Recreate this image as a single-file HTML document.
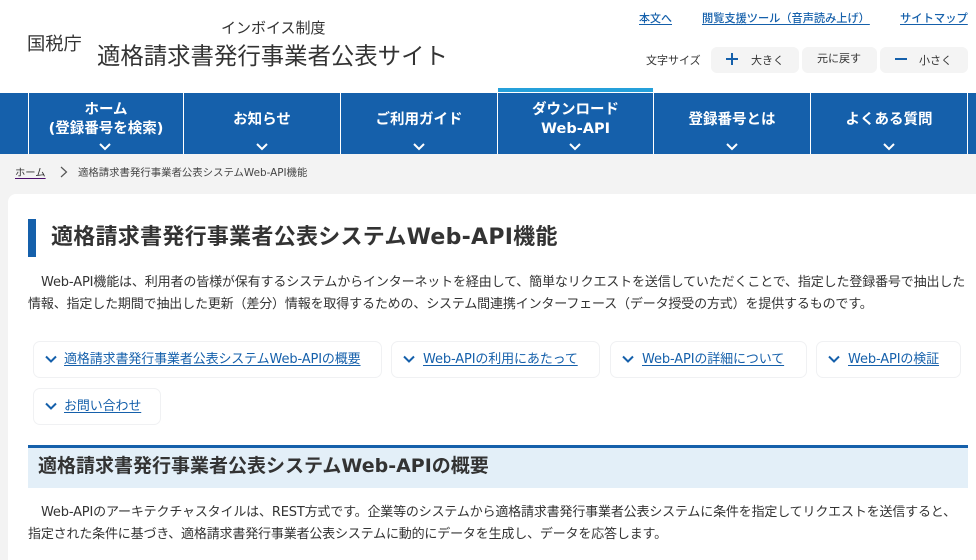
<!DOCTYPE html>
<html lang="ja"><head><meta charset="utf-8"><title>適格請求書発行事業者公表システムWeb-API機能</title>
<style>
html,body{margin:0;padding:0;background:#fff}
#p{position:relative;width:976px;height:560px;overflow:hidden;background:#fff;font-family:"DejaVu Sans","Noto Sans CJK JP",sans-serif;color:#333}
#p *{box-sizing:border-box}
.a{position:absolute;white-space:nowrap}
.l{color:#1560ab;text-decoration:underline;text-underline-offset:2px}
.n{position:absolute;top:93px;height:61px;border-left:1px solid #fff;color:#fff;font-weight:700;font-size:14.500px;line-height:19px;text-align:center}
.n span{position:absolute;left:0;right:0;white-space:nowrap}
.n svg{position:absolute;left:50%;margin-left:-7px;top:49px}
.b{position:absolute;height:26px;top:47px;background:#f4f4f4;border-radius:6px}
.t{position:absolute;height:37px;background:#fff;border:1px solid #f0f1f3;border-radius:7px}
.t svg{position:absolute;left:10px;top:13px}
.t a{position:absolute;left:30px;top:8px;font-size:13px;line-height:20px;white-space:nowrap;letter-spacing:-.13px}
</style></head><body><div id="p">
<div class="a" style="left:27px;top:34px;font-size:18.300px;line-height:22px;color:#333">国税庁</div>
<div class="a" style="left:221px;top:18px;font-size:15px;line-height:20px;color:#333">インボイス制度</div>
<div class="a" style="left:97px;top:40px;font-size:23.400px;line-height:32px;color:#333">適格請求書発行事業者公表サイト</div>

<a class="a l" style="left:639px;top:11px;font-size:11px;line-height:16px;font-weight:500">本文へ</a>
<a class="a l" style="left:702px;top:11px;font-size:11.200px;line-height:16px;font-weight:500">閲覧支援ツール（音声読み上げ）</a>
<a class="a l" style="left:900px;top:11px;font-size:11.300px;line-height:16px;font-weight:500">サイトマップ</a>

<div class="a" style="left:646px;top:53px;font-size:11px;line-height:16px">文字サイズ</div>
<div class="b" style="left:711px;width:88px"></div>
<div class="b" style="left:802px;width:75px"></div>
<div class="b" style="left:880px;width:88px"></div>
<div class="a" style="left:726px;top:58px;width:12px;height:2px;background:#1560ab"></div>
<div class="a" style="left:731px;top:53px;width:2px;height:12px;background:#1560ab"></div>
<div class="a" style="left:751px;top:53px;font-size:11px;line-height:16px">大きく</div>
<div class="a" style="left:817px;top:51px;font-size:11px;line-height:16px">元に戻す</div>
<div class="a" style="left:895px;top:58px;width:12px;height:2px;background:#1560ab"></div>
<div class="a" style="left:919px;top:53px;font-size:11px;line-height:16px">小さく</div>

<div class="a" style="left:0;top:93px;width:976px;height:61px;background:#1560ab"></div>
<div class="a" style="left:498px;top:88px;width:155px;height:4px;background:#25a0da"></div>
<div class="n" style="left:28px;width:155px"><span style="top:8px">ホーム</span><span style="top:27px">(登録番号を検索)</span><svg style="margin-left:-8px" width="14" height="9" viewBox="0 0 14 9"><path d="M2 2l5 5 5-5" fill="none" stroke="#fff" stroke-width="2"/></svg></div>
<div class="n" style="left:183px;width:157px"><span style="top:18px">お知らせ</span><svg width="14" height="9" viewBox="0 0 14 9"><path d="M2 2l5 5 5-5" fill="none" stroke="#fff" stroke-width="2"/></svg></div>
<div class="n" style="left:340px;width:157px"><span style="top:18px">ご利用ガイド</span><svg width="14" height="9" viewBox="0 0 14 9"><path d="M2 2l5 5 5-5" fill="none" stroke="#fff" stroke-width="2"/></svg></div>
<div class="n" style="left:497px;width:156px"><span style="top:8px">ダウンロード</span><span style="top:27px">Web-API</span><svg style="margin-left:-8px" width="14" height="9" viewBox="0 0 14 9"><path d="M2 2l5 5 5-5" fill="none" stroke="#fff" stroke-width="2"/></svg></div>
<div class="n" style="left:653px;width:157px"><span style="top:18px">登録番号とは</span><svg width="14" height="9" viewBox="0 0 14 9"><path d="M2 2l5 5 5-5" fill="none" stroke="#fff" stroke-width="2"/></svg></div>
<div class="n" style="left:810px;width:157px"><span style="top:18px">よくある質問</span><svg width="14" height="9" viewBox="0 0 14 9"><path d="M2 2l5 5 5-5" fill="none" stroke="#fff" stroke-width="2"/></svg></div>
<div class="n" style="left:967px;width:9px"></div>

<div class="a" style="left:0;top:154px;width:976px;height:406px;background:#f3f3f3"></div>
<a class="a" style="left:15px;top:166px;font-size:10.300px;line-height:15px;color:#333;text-decoration:underline;text-decoration-color:#4b0f6b;text-underline-offset:2px">ホーム</a>
<svg class="a" style="left:59px;top:166px" width="10" height="13" viewBox="0 0 10 13"><path d="M2 1l5.500 5-5.500 5" fill="none" stroke="#555" stroke-width="1.200"/></svg>
<div class="a" style="left:78px;top:166px;font-size:10.400px;line-height:15px;color:#444">適格請求書発行事業者公表システムWeb-API機能</div>

<div class="a" style="left:8px;top:194px;width:980px;height:380px;background:#fff;border-radius:8px"></div>
<div class="a" style="left:28px;top:219px;width:8px;height:38px;background:#1560ab"></div>
<div class="a" style="left:51px;top:223px;font-size:22px;line-height:30px;font-weight:700;color:#333;letter-spacing:.27px">適格請求書発行事業者公表システムWeb-API機能</div>

<div class="a" style="left:41px;top:273px;font-size:13px;line-height:20px;letter-spacing:-.14px">Web-API機能は、利用者の皆様が保有するシステムからインターネットを経由して、簡単なリクエストを送信していただくことで、指定した登録番号で抽出した</div>
<div class="a" style="left:28px;top:295px;font-size:13px;line-height:20px;letter-spacing:-.155px">情報、指定した期間で抽出した更新（差分）情報を取得するための、システム間連携インターフェース（データ授受の方式）を提供するものです。</div>

<div class="t" style="left:33px;top:341px;width:349px"><svg width="14" height="9" viewBox="0 0 14 9"><path d="M2 1.500l5 5 5-5" fill="none" stroke="#1560ab" stroke-width="2"/></svg><a class="l">適格請求書発行事業者公表システムWeb-APIの概要</a></div>
<div class="t" style="left:391px;top:341px;width:209px"><svg width="14" height="9" viewBox="0 0 14 9"><path d="M2 1.500l5 5 5-5" fill="none" stroke="#1560ab" stroke-width="2"/></svg><a class="l" style="left:31px">Web-APIの利用にあたって</a></div>
<div class="t" style="left:610px;top:341px;width:197px"><svg width="14" height="9" viewBox="0 0 14 9"><path d="M2 1.500l5 5 5-5" fill="none" stroke="#1560ab" stroke-width="2"/></svg><a class="l" style="left:31px">Web-APIの詳細について</a></div>
<div class="t" style="left:816px;top:341px;width:145px"><svg width="14" height="9" viewBox="0 0 14 9"><path d="M2 1.500l5 5 5-5" fill="none" stroke="#1560ab" stroke-width="2"/></svg><a class="l" style="left:31px">Web-APIの検証</a></div>
<div class="t" style="left:33px;top:388px;width:128px"><svg width="14" height="9" viewBox="0 0 14 9"><path d="M2 1.500l5 5 5-5" fill="none" stroke="#1560ab" stroke-width="2"/></svg><a class="l">お問い合わせ</a></div>

<div class="a" style="left:28px;top:445px;width:940px;height:43px;background:#e3eff8;border-top:3px solid #1560ab"></div>
<div class="a" style="left:38px;top:452px;font-size:19px;line-height:28px;font-weight:700;color:#333">適格請求書発行事業者公表システムWeb-APIの概要</div>
<div class="a" style="left:41px;top:503px;font-size:13px;line-height:20px;letter-spacing:-.17px">Web-APIのアーキテクチャスタイルは、REST方式です。企業等のシステムから適格請求書発行事業者公表システムに条件を指定してリクエストを送信すると、</div>
<div class="a" style="left:28px;top:525px;font-size:13px;line-height:20px;letter-spacing:-.17px">指定された条件に基づき、適格請求書発行事業者公表システムに動的にデータを生成し、データを応答します。</div>
</div></body></html>
